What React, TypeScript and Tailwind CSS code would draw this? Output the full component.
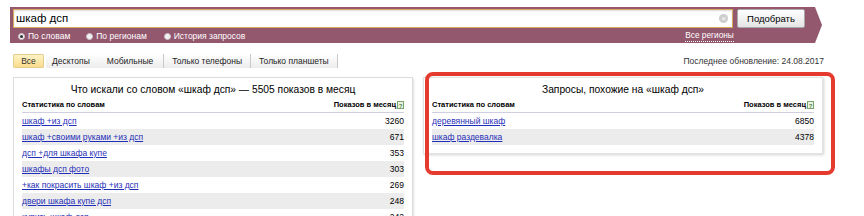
import React from 'react';

const leftRows = [
  { q: 'шкаф +из дсп', n: 3260 },
  { q: 'шкаф +своими руками +из дсп', n: 671 },
  { q: 'дсп +для шкафа купе', n: 353 },
  { q: 'шкафы дсп фото', n: 303 },
  { q: '+как покрасить шкаф +из дсп', n: 269 },
  { q: 'двери шкафа купе дсп', n: 248 },
  { q: 'купить шкаф дсп', n: 242 },
];

const rightRows = [
  { q: 'деревянный шкаф', n: 6850 },
  { q: 'шкаф раздевалка', n: 4378 },
];

function HelpIcon() {
  return (
    <svg width="7" height="8" viewBox="0 0 7 8" className="ml-px">
      <rect x="0.5" y="0.5" width="6" height="7" fill="#eaf3e4" stroke="#7aa66a" />
      <text x="3.5" y="6.5" fontSize="6" textAnchor="middle" fill="#4d7d40" fontFamily="Liberation Sans, sans-serif">?</text>
    </svg>
  );
}

function Radio({ checked, label }: { checked?: boolean; label: string }) {
  return (
    <label className="flex items-center gap-[3px]">
      <span className="w-[7px] h-[7px] rounded-full bg-[#f2f2f2] border border-[#cbc3c7] flex items-center justify-center">
        {checked && <span className="w-[3px] h-[3px] rounded-full bg-[#333]" />}
      </span>
      <span>{label}</span>
    </label>
  );
}

function StatTable({ title, rows }: { title: string; rows: { q: string; n: number }[] }) {
  return (
    <>
      <div className="text-center text-[10.25px] leading-[16px] text-black pt-[4px]">{title}</div>
      <div className="flex items-end justify-between text-[7.5px] leading-[12px] font-bold text-black pt-[1px] pb-[1px] border-b border-[#cfcfdf]">
        <span>Статистика по словам</span>
        <span className="flex items-center">
          Показов в месяц
          <HelpIcon />
        </span>
      </div>
      {rows.map((r, i) => (
        <div
          key={r.q}
          className={`flex items-center justify-between h-[16px] text-[8.5px] ${i % 2 === 1 ? 'bg-[#ececec]' : ''}`}
        >
          <a className="text-[#1f2fb8] underline">{r.q}</a>
          <span className="text-black">{r.n}</span>
        </div>
      ))}
    </>
  );
}

export default function App() {
  return (
    <div className="w-[864px] h-[216px] overflow-hidden bg-white font-['Liberation_Sans',Arial,sans-serif]">
      {/* Search band */}
      <div className="pt-[7px] pl-[10px]">
        <div className="w-[812px] h-[36px] bg-[#93586e] [clip-path:polygon(0_0,805px_0,100%_50%,805px_100%,0_100%)] pl-[3px] pt-[2px]">
          <div className="flex items-center gap-[4px]">
            <div className="relative w-[720px] h-[19px] bg-white border border-[#d9a960] shadow-[inset_0_1px_2px_rgba(0,0,0,0.15)] flex items-center pl-[2px]">
              <span className="text-[11.5px] leading-none text-black">шкаф дсп</span>
              <span className="absolute right-[4px] top-[4px] w-[9px] h-[9px] rounded-full bg-[#cdcdcd] flex items-center justify-center text-white text-[8px] leading-none">×</span>
            </div>
            <button className="w-[68px] h-[19px] border border-[#a9a9a9] rounded-[2px] bg-gradient-to-b from-white to-[#e4e4e4] text-[9.5px] leading-none text-black">
              Подобрать
            </button>
          </div>
          <div className="flex items-center text-[8.5px] text-white h-[14px] mt-[1px]">
            <div className="flex items-center pl-[5px]">
              <Radio checked label="По словам" />
              <div className="ml-[16px]"><Radio label="По регионам" /></div>
              <div className="ml-[17px]"><Radio label="История запросов" /></div>
            </div>
            <span className="ml-[440px] text-[8.25px] border-b border-dotted border-white leading-[10px]">Все регионы</span>
          </div>
        </div>
      </div>

      {/* Tabs */}
      <div className="flex items-center w-[824px] pl-[13px] mt-[11px] text-[8.5px]">
        <div className="flex h-[14px]">
          <span className="w-[31px] justify-center flex items-center bg-gradient-to-b from-[#fff3c4] to-[#f9dc8c] border border-[#e3cf8d] rounded-[1px] text-[#333]">Все</span>
          <div className="flex ml-[2px] bg-gradient-to-b from-white to-[#ececec] border-r border-[#c9c9c9]">
            <span className="pl-[6px] pr-[8px] flex items-center text-[#222]">Десктопы</span>
            <span className="pl-[9px] pr-[10px] flex items-center text-[#222] border-r border-[#c9c9c9]">Мобильные</span>
            <span className="px-[8px] flex items-center text-[#222] border-r border-[#c9c9c9]">Только телефоны</span>
            <span className="px-[8px] flex items-center text-[#222]">Только планшеты</span>
          </div>
        </div>
        <span className="ml-auto text-[#333] text-[8.5px]">Последнее обновление: 24.08.2017</span>
      </div>

      {/* Panels */}
      <div className="flex items-start pl-[13px] mt-[9px]">
        <div className="w-[400px] h-[200px] border border-[#dcdcdc] shadow-[1px_1px_2px_rgba(0,0,0,0.12)] px-[8px]">
          <StatTable title="Что искали со словом «шкаф дсп» — 5505 показов в месяц" rows={leftRows} />
        </div>
        <div className="relative ml-[10px] w-[400px]">
          <div className="border border-[#e2e2e2] shadow-[1px_1px_3px_rgba(0,0,0,0.18)] px-[8px] pb-[8px]">
            <StatTable title="Запросы, похожие на «шкаф дсп»" rows={rightRows} />
          </div>
          <div className="absolute left-[2px] top-[-5px] w-[410px] h-[103px] border-[4px] border-[#e53b2f] rounded-[8px] pointer-events-none" />
        </div>
      </div>
    </div>
  );
}
